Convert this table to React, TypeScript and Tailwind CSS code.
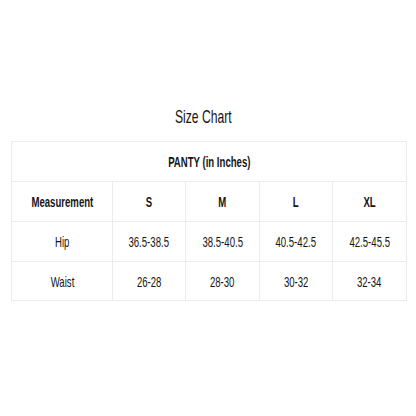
import React from "react";

const widths = ["w-[101px]", "w-[73px]", "w-[74px]", "w-[73px]", "w-[73px]"];

function T({ children, bold }: { children: React.ReactNode; bold?: boolean }) {
  return (
    <span
      className={`inline-block whitespace-nowrap scale-x-[0.64] text-[15px] leading-none text-[#151515] ${bold ? "font-bold" : "font-normal"}`}
    >
      {children}
    </span>
  );
}

function Row({ cells, bold, h, last }: { cells: string[]; bold?: boolean; h: string; last?: boolean }) {
  return (
    <div className={`flex ${h} ${last ? "" : "border-b border-[#ececec]"}`}>
      {cells.map((c, i) => (
        <div
          key={i}
          className={`${widths[i]} flex items-center justify-center ${i < 4 ? "border-r border-[#ececec]" : ""}`}
        >
          <T bold={bold}>{c}</T>
        </div>
      ))}
    </div>
  );
}

export default function App() {
  return (
    <div
      className="w-[416px] h-[416px] bg-white flex flex-col pt-[104px]"
      style={{ fontFamily: '"Liberation Sans", Arial, sans-serif' }}
    >
      <div className="h-[24px] flex items-center justify-center pr-[9px]">
        <span className="inline-block whitespace-nowrap scale-x-[0.64] text-[19px] leading-none text-[#151515]">
          Size Chart
        </span>
      </div>
      <div className="mt-[13px] ml-[11px] w-[396px] border border-[#ececec] flex flex-col">
        <div className="h-[40px] border-b border-[#ececec] flex items-center justify-center">
          <T bold>PANTY (in Inches)</T>
        </div>
        <Row cells={["Measurement", "S", "M", "L", "XL"]} bold h="h-[40px]" />
        <Row cells={["Hip", "36.5-38.5", "38.5-40.5", "40.5-42.5", "42.5-45.5"]} h="h-[40px]" />
        <Row cells={["Waist", "26-28", "28-30", "30-32", "32-34"]} h="h-[38px]" last />
      </div>
    </div>
  );
}
